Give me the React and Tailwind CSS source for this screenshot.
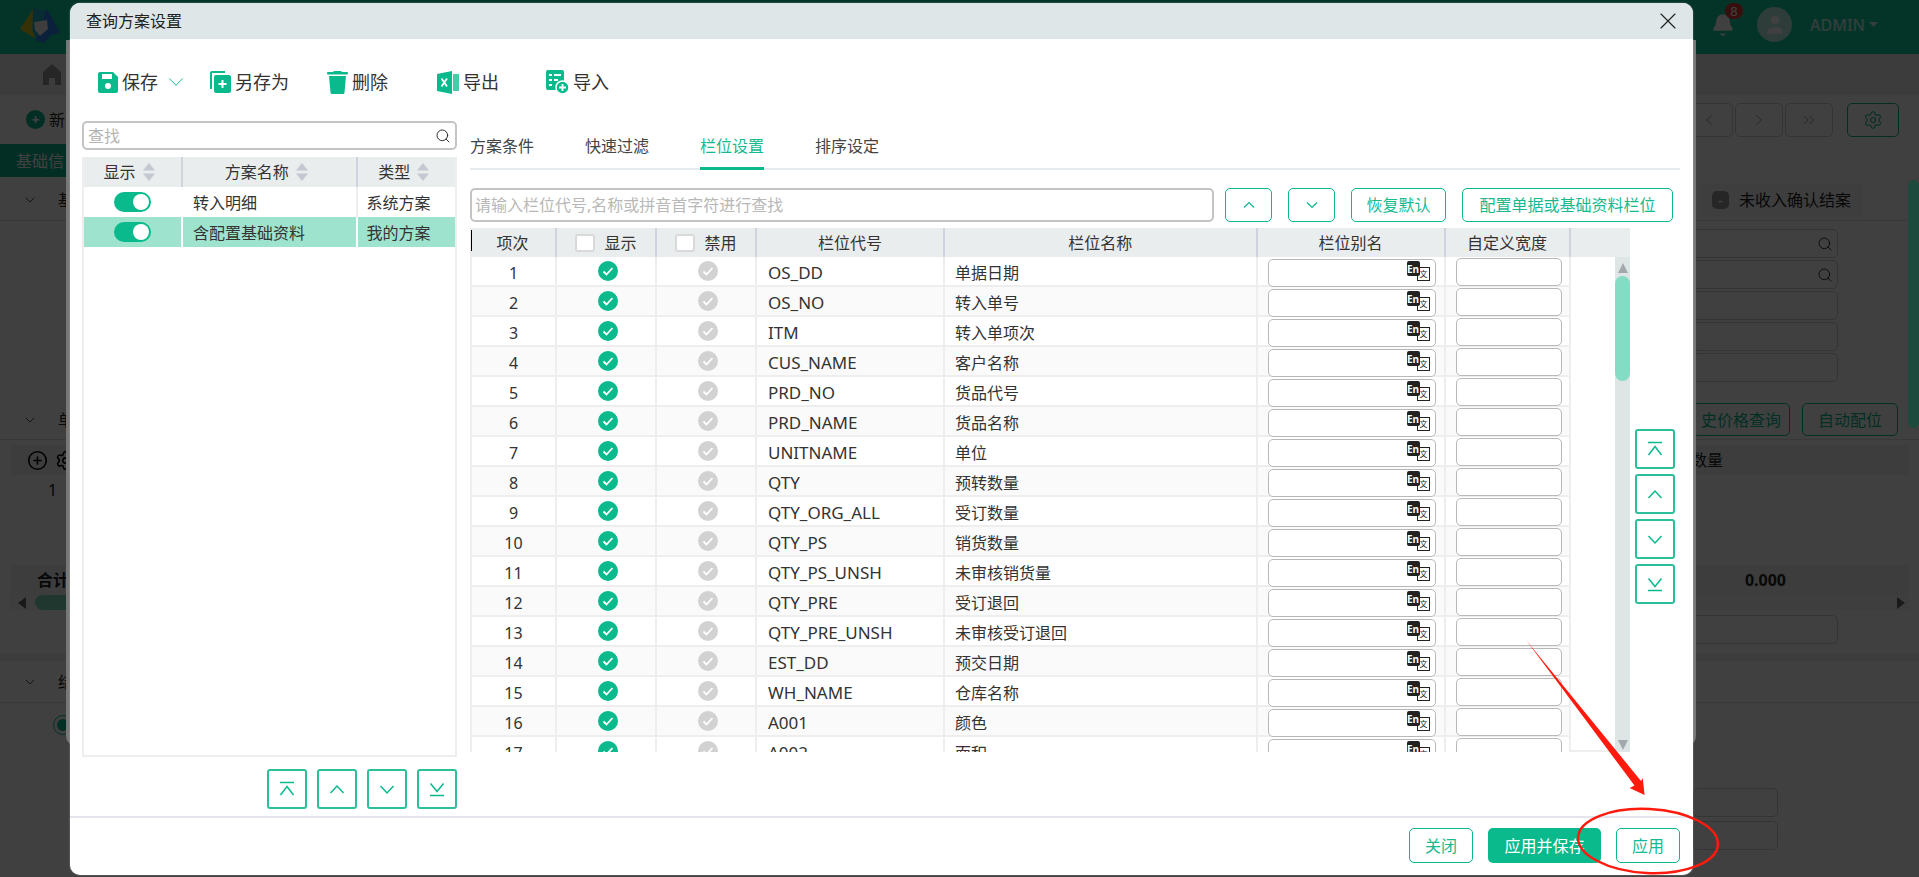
import { Bell, ChevronDown, ChevronLeft, ChevronRight, ChevronsRight, CirclePlus, Search, Settings, User, X } from "lucide-react";

const FONT = "font-['Noto_Sans','Noto_Sans_CJK_SC',sans-serif]";

const ROWS = [
  ["OS_DD", "单据日期"],
  ["OS_NO", "转入单号"],
  ["ITM", "转入单项次"],
  ["CUS_NAME", "客户名称"],
  ["PRD_NO", "货品代号"],
  ["PRD_NAME", "货品名称"],
  ["UNITNAME", "单位"],
  ["QTY", "预转数量"],
  ["QTY_ORG_ALL", "受订数量"],
  ["QTY_PS", "销货数量"],
  ["QTY_PS_UNSH", "未审核销货量"],
  ["QTY_PRE", "受订退回"],
  ["QTY_PRE_UNSH", "未审核受订退回"],
  ["EST_DD", "预交日期"],
  ["WH_NAME", "仓库名称"],
  ["A001", "颜色"],
  ["A002", "面积"],
];

const GRID = "grid grid-cols-[87px_100px_100px_188px_312.5px_188px_125px]";

function SaveIcon() {
  return (
    <svg width="20" height="21" viewBox="0 0 20 21">
      <path d="M2 0h13l5 5v14a2 2 0 0 1-2 2H2a2 2 0 0 1-2-2V2a2 2 0 0 1 2-2z" fill="#0ab98c" />
      <rect x="4" y="2" width="10" height="5" rx="0.5" fill="#fff" />
      <circle cx="10" cy="14" r="3" fill="#fff" />
    </svg>
  );
}

function SaveAsIcon() {
  return (
    <svg width="21" height="22" viewBox="0 0 21 22">
      <path d="M1 18V2a1 1 0 0 1 1-1h13" fill="none" stroke="#0ab98c" strokeWidth="2" />
      <rect x="4" y="4" width="17" height="18" rx="2" fill="#0ab98c" />
      <path d="M12.5 9v8M8.500 13h8" stroke="#fff" strokeWidth="2" />
    </svg>
  );
}

function TrashIcon() {
  return (
    <svg width="21" height="23" viewBox="0 0 21 23">
      <rect x="0" y="1" width="21" height="2.500" rx="1" fill="#0ab98c" />
      <path d="M6 1l1-1h7l1 1z" fill="#0ab98c" />
      <path d="M2 5h17l-1.500 16.500a1.500 1.500 0 0 1-1.500 1.500H5a1.500 1.500 0 0 1-1.500-1.500z" fill="#0ab98c" />
    </svg>
  );
}

function ExcelIcon() {
  return (
    <svg width="22" height="23" viewBox="0 0 22 23">
      <path d="M0 3l15-3v23L0 20z" fill="#0ab98c" />
      <path d="M16 3h6v17h-6z" fill="#0ab98c" opacity="0.75" />
      <path d="M4.500 7.500l5.500 8M10 7.500l-5.500 8" stroke="#fff" strokeWidth="1.800" />
    </svg>
  );
}

function ImportIcon() {
  return (
    <svg width="23" height="24" viewBox="0 0 23 24">
      <path d="M2 0h14a2 2 0 0 1 2 2v18H2a2 2 0 0 1-2-2V2a2 2 0 0 1 2-2z" fill="#0ab98c" />
      <path d="M3 5h3M8 5h7M3 10h3M8 10h4M3 15h3" stroke="#fff" strokeWidth="2" />
      <circle cx="16.500" cy="17.500" r="6.500" fill="#0ab98c" stroke="#fff" strokeWidth="1.500" />
      <path d="M16.500 14v7M13 17.500h7" stroke="#fff" strokeWidth="1.800" />
    </svg>
  );
}

function ToolItem({ icon, label, className }) {
  return (
    <div className={`flex items-center gap-1 ${className}`}>
      {icon}
      <span className="text-[18px] leading-6 text-[#333]">{label}</span>
    </div>
  );
}

function SortCaret() {
  return (
    <svg width="14" height="20" viewBox="0 0 14 20" className="shrink-0">
      <path d="M7 1l6 7.500H1z" fill="#c3c8d2" />
      <path d="M7 19l6-7.500H1z" fill="#c3c8d2" />
    </svg>
  );
}

function Toggle() {
  return (
    <div className="flex h-5 w-[37px] items-center justify-end rounded-full bg-[#0ab98c] pr-[2px]">
      <div className="h-4 w-4 rounded-full bg-white" />
    </div>
  );
}

function CheckMark({ on }) {
  return (
    <svg width="20" height="20" viewBox="0 0 20 20" className="ml-1">
      <circle cx="10" cy="10" r="10" fill={on ? "#0ab98c" : "#d2d2d2"} />
      <path d="M5.500 10.500l3 3 6-6.500" fill="none" stroke="#fff" strokeWidth="1.800" />
    </svg>
  );
}

function Box() {
  return <div className="h-[18px] w-5 rounded-[3px] border-2 border-[#d9d9d9] bg-white" />;
}

function Arrow({ type }) {
  return (
    <svg width="18" height="18" viewBox="0 0 18 18" fill="none" stroke="#0ab98c" strokeWidth="1.500">
      {type === "top" && <path d="M2 2.500h14M2.500 15L9 6.500 15.500 15" />}
      {type === "up" && <path d="M2.500 13L9 6l6.500 7" />}
      {type === "down" && <path d="M2.500 6L9 13l6.500-7" />}
      {type === "bottom" && <path d="M2.500 3.500L9 11.500l6.500-8M2 15.500h14" />}
    </svg>
  );
}

function MoveBtn({ type }) {
  return (
    <button className="flex h-10 w-10 items-center justify-center rounded-[3px] border-2 border-[#2cc09a] bg-white">
      <Arrow type={type} />
    </button>
  );
}

function SmallArrowBtn({ d }) {
  return (
    <button className="flex h-[34px] w-[47px] items-center justify-center rounded-[5px] border border-[#0ab98c] bg-white">
      <svg width="14" height="14" viewBox="0 0 14 14" fill="none" stroke="#0ab98c" strokeWidth="1.200">
        <path d={d} />
      </svg>
    </button>
  );
}

function OutlineBtn({ className, children }) {
  return (
    <button className={`flex h-[35px] items-center justify-center rounded-[5px] border border-[#0ab98c] bg-white text-[16px] text-[#15ba8f] ${className}`}>
      {children}
    </button>
  );
}

function EnIcon() {
  return (
    <div className="absolute right-[5px] top-[1px] h-[20px] w-[23px]">
      <div className="absolute bottom-0 right-0 flex h-[14px] w-[13px] items-center justify-end border border-[#222] bg-white pr-[1px] text-[8px] leading-none text-[#222]">文</div>
      <div className="absolute left-0 top-0 flex h-[15px] w-[13px] items-center justify-center rounded-[2px] bg-[#222] text-[10px] font-bold leading-none text-white">En</div>
    </div>
  );
}

function FieldRow({ index, code, name }) {
  const stripe = index % 2 === 1 ? "bg-[#fafafa]" : "bg-white";
  const cell = "flex h-[30px] items-center border-r-2 border-b-2 border-[#eeeeee]";
  return (
    <div className={`${GRID} ${stripe} text-[16px] text-[#333]`}>
      <div className={`${cell} justify-center border-l-2 pt-[3px]`}>{index + 1}</div>
      <div className={`${cell} justify-center`}><CheckMark on /></div>
      <div className={`${cell} justify-center`}><CheckMark /></div>
      <div className={`${cell} pl-[11px] pt-[3px] text-[17px]`}>{code}</div>
      <div className={`${cell} pl-[10px] pt-[3px]`}>{name}</div>
      <div className={`${cell} pl-[10px]`}>
        <div className="relative h-[28px] w-[168px] translate-y-[2px] rounded-[5px] border border-[#b8b8b8] bg-white">
          <EnIcon />
        </div>
      </div>
      <div className={`${cell} pl-[10px]`}>
        <div className="h-[28px] w-[106px] translate-y-[1px] rounded-[5px] border border-[#b8b8b8] bg-white" />
      </div>
    </div>
  );
}

function FieldHead() {
  const cell = "flex h-[29px] items-center justify-center gap-[9px] border-r-2 border-[#cfd3de]";
  return (
    <div className="relative flex w-[1160px] bg-[#e9eded] text-[16px] text-[#333]">
      <div className="absolute left-[1px] top-[2px] h-[21px] w-px bg-black" />
      <div className={GRID}>
        <div className={cell}>项次</div>
        <div className={cell}><Box />显示</div>
        <div className={cell}><Box />禁用</div>
        <div className={cell}>栏位代号</div>
        <div className={cell}>栏位名称</div>
        <div className={cell}>栏位别名</div>
        <div className={cell}>自定义宽度</div>
      </div>
    </div>
  );
}

function Scrollbar() {
  return (
    <div className="flex h-[495px] w-[15px] flex-col items-center bg-[#dde6e4]">
      <svg width="12" height="10" viewBox="0 0 12 10" className="mt-[6px] shrink-0">
        <path d="M6 0l5 10H1z" fill="#a3a8ae" />
      </svg>
      <div className="mt-[3px] h-[105px] w-[15px] rounded-full bg-[#85dcc4]" />
      <div className="flex-1" />
      <svg width="12" height="10" viewBox="0 0 12 10" className="mb-[2px] shrink-0">
        <path d="M6 10l5-10H1z" fill="#a3a8ae" />
      </svg>
    </div>
  );
}

function PlanRow({ name, type, selected }) {
  return (
    <div className={`grid h-[30px] grid-cols-[99px_174.500px_1fr] text-[16px] text-[#333] ${selected ? "bg-[#9ee3ce]" : "bg-white"}`}>
      <div className="flex items-center justify-center border-r-2 border-white"><Toggle /></div>
      <div className={`flex items-center border-r-2 pl-[10px] pt-[2px] ${selected ? "border-white" : "border-[#eeeeee]"}`}>{name}</div>
      <div className="flex items-center pl-[9px] pt-[2px]">{type}</div>
    </div>
  );
}

function PlanPanel() {
  return (
    <div className="w-[375px]">
      <div className="flex h-[29px] items-center justify-between rounded-[5px] border-2 border-[#c4c4c4] pl-1 pr-1">
        <span className="text-[16px] text-[#b4b4b4]">查找</span>
        <Search size={16} strokeWidth={1.400} className="text-[#222]" />
      </div>
      <div className="mt-[7px] h-[600px] border-2 border-t-0 border-[#eeeeee]">
        <div className="grid h-[30px] grid-cols-[99px_174.500px_1fr] bg-[#e9eded] text-[16px] text-[#333]">
          <div className="flex items-center justify-center gap-[6px] border-r-2 border-[#cfd3de] pr-[6px]">显示<SortCaret /></div>
          <div className="flex items-center justify-center gap-[6px] border-r-2 border-[#cfd3de] pr-[5px]">方案名称<SortCaret /></div>
          <div className="flex items-center justify-center gap-[6px] pr-[4px]">类型<SortCaret /></div>
        </div>
        <PlanRow name="转入明细" type="系统方案" />
        <PlanRow name="含配置基础资料" type="我的方案" selected />
      </div>
      <div className="mt-[12px] flex justify-end gap-[10px]">
        <MoveBtn type="top" />
        <MoveBtn type="up" />
        <MoveBtn type="down" />
        <MoveBtn type="bottom" />
      </div>
    </div>
  );
}

function FieldPanel() {
  return (
    <div className="w-[1210px]">
      <div className="flex h-[49px] gap-[51px] border-b-2 border-[#e6e9ee] text-[16px] text-[#444]">
        <div className="flex h-[49px] items-center pt-[1px]">方案条件</div>
        <div className="flex h-[49px] items-center pt-[1px]">快速过滤</div>
        <div className="flex h-[49px] items-center border-b-[3px] border-[#0ab98c] pt-[4px] text-[#15ba8f]">栏位设置</div>
        <div className="flex h-[49px] items-center pt-[1px]">排序设定</div>
      </div>
      <div className="mt-[18px] flex h-[34px] items-center">
        <div className="flex h-[34px] w-[744px] items-center rounded-[5px] border-2 border-[#c4c4c4] pl-[3px] text-[16px] text-[#b8b8b8]">
          请输入栏位代号,名称或拼音首字符进行查找
        </div>
        <div className="ml-[11px]"><SmallArrowBtn d="M2 9.500L7 4.500l5 5" /></div>
        <div className="ml-4"><SmallArrowBtn d="M2 4.500L7 9.500l5-5" /></div>
        <button className="ml-4 h-[34px] w-[95px] rounded-[5px] border border-[#0ab98c] text-[16px] text-[#15ba8f]">恢复默认</button>
        <button className="ml-4 h-[34px] w-[211px] rounded-[5px] border border-[#0ab98c] text-[16px] text-[#15ba8f]">配置单据或基础资料栏位</button>
      </div>
      <div className="mt-[6px] flex">
        <div className="w-[1160px]">
          <FieldHead />
          <div className="flex h-[495px] overflow-hidden">
            <div className="w-[1100px]">
              {ROWS.map((r, i) => (
                <FieldRow key={r[0]} index={i} code={r[0]} name={r[1]} />
              ))}
            </div>
            <div className="w-[45px] border-b-2 border-[#eeeeee]" />
            <Scrollbar />
          </div>
        </div>
        <div className="ml-[5px] mt-[201px] flex flex-col gap-[5px]">
          <MoveBtn type="top" />
          <MoveBtn type="up" />
          <MoveBtn type="down" />
          <MoveBtn type="bottom" />
        </div>
      </div>
    </div>
  );
}

function Modal() {
  return (
    <div className="absolute left-[70px] top-[3px] z-20 flex h-[872px] w-[1623px] flex-col overflow-hidden rounded-[10px] bg-white shadow-[0_0_2px_rgba(255,255,255,0.4)]">
      <div className="flex h-[36px] shrink-0 items-center justify-between bg-[#dee6e8] pl-4 pr-[11px]">
        <span className="text-[16px] text-[#222]">查询方案设置</span>
        <X size={28} strokeWidth={1} className="text-[#222]" />
      </div>
      <div className="flex h-[82px] shrink-0 items-center pl-7 pt-[4px]">
        <ToolItem icon={<SaveIcon />} label="保存" />
        <ChevronDown size={26} strokeWidth={0.900} className="ml-[5px] text-[#0ab98c]" />
        <ToolItem icon={<SaveAsIcon />} label="另存为" className="ml-[21px]" />
        <ToolItem icon={<TrashIcon />} label="删除" className="ml-[38px]" />
        <ToolItem icon={<ExcelIcon />} label="导出" className="ml-[49px]" />
        <ToolItem icon={<ImportIcon />} label="导入" className="ml-[47px]" />
      </div>
      <div className="flex h-[695px] shrink-0 pl-3">
        <PlanPanel />
        <div className="ml-[13px]"><FieldPanel /></div>
      </div>
      <div className="flex flex-1 justify-end gap-[15px] border-t-2 border-[#e4e4ec] pr-[13px] pt-[10px]">
        <OutlineBtn className="w-16">关闭</OutlineBtn>
        <button className="h-[35px] w-[113px] rounded-[5px] bg-[#0ab98c] text-[16px] text-white">应用并保存</button>
        <OutlineBtn className="w-16">应用</OutlineBtn>
      </div>
    </div>
  );
}

function Logo() {
  return (
    <svg width="40" height="36" viewBox="0 0 40 36">
      <path d="M1 22L15 1l10 6-8 24z" fill="#d8c21f" stroke="#d8c21f" strokeLinejoin="round" strokeWidth="1.500" />
      <path d="M14 1l13 4 2 26-12 3-4-12z" fill="#1fb0c8" stroke="#1fb0c8" strokeLinejoin="round" strokeWidth="1.500" />
      <path d="M27 3l12 22-9 3-6 7-7-2z" fill="#2f7fe8" stroke="#2f7fe8" strokeLinejoin="round" strokeWidth="1.500" />
      <path d="M14 15l13-2 1 9-8 7-5-6z" fill="#eef2f0" />
    </svg>
  );
}

function NavBtn({ children }) {
  return <div className="flex h-[34px] w-[48px] items-center justify-center rounded-[5px] border border-[#cfcfcf] text-[#8a8a8a]">{children}</div>;
}

function GhostInput({ className, icon }) {
  return (
    <div className={`flex h-[29px] items-center justify-end rounded-[5px] border border-[#cfcfcf] bg-white pr-1 ${className}`}>
      {icon && <Search size={16} strokeWidth={1.400} className="text-[#222]" />}
    </div>
  );
}

function PageBehind() {
  return (
    <div className="flex h-[877px] flex-col bg-white text-[16px] text-[#222]">
      <div className="flex h-[54px] shrink-0 items-center justify-between bg-[#10cfa0] pb-[5px] pl-5 pr-[41px]">
        <Logo />
        <div className="flex items-center text-white">
          <div className="relative mr-[22px]">
            <Bell size={24} fill="#fff" strokeWidth={1.500} />
            <span className="absolute -right-2 -top-[10px] flex h-[16px] w-[18px] items-center justify-center rounded-full bg-[#e03838] text-[13px] leading-[16px]">8</span>
          </div>
          <div className="flex h-[35px] w-[35px] items-center justify-center overflow-hidden rounded-full bg-white/70">
            <User size={24} fill="#fff" strokeWidth={1} />
          </div>
          <span className="ml-[18px] text-[16px] font-medium text-white/80">ADMIN</span>
          <svg width="9" height="5" viewBox="0 0 9 5" className="ml-1"><path d="M0 0h9L4.500 5z" fill="#fff" fillOpacity="0.8" /></svg>
        </div>
      </div>

      <div className="flex h-[41px] shrink-0 items-center bg-[#f0f0f0] pl-[43px]">
        <svg width="18" height="21" viewBox="0 0 18 21"><path d="M9 0l9 8v13h-6v-7H6v7H0V8z" fill="#999" /></svg>
      </div>

      <div className="flex h-[49px] shrink-0 items-center justify-between pl-[26px] pr-5">
        <div className="flex items-center gap-1">
          <div className="flex h-[19px] w-[19px] items-center justify-center rounded-full bg-[#0db88c] text-[14px] font-bold leading-none text-white">+</div>
          <span>新</span>
        </div>
        <div className="flex items-center">
          <div className="flex gap-[2px]">
            <NavBtn><ChevronLeft size={18} strokeWidth={1.200} /></NavBtn>
            <NavBtn><ChevronRight size={18} strokeWidth={1.200} /></NavBtn>
            <NavBtn><ChevronsRight size={18} strokeWidth={1.200} /></NavBtn>
          </div>
          <div className="ml-[14px] flex h-[34px] w-[52px] items-center justify-center rounded-[5px] border border-[#0db88c] text-[#0db88c]">
            <Settings size={20} strokeWidth={1.300} />
          </div>
        </div>
      </div>

      <div className="flex h-[33px] w-[70px] shrink-0 items-center rounded-r-[4px] bg-[#0db88c] pl-4 text-white">基础信</div>

      <div className="mt-[3px] flex h-[41px] shrink-0 items-center justify-between border-b border-[#ddd] pl-[22px] pr-[56px]">
        <div className="flex items-center gap-5">
          <ChevronDown size={16} strokeWidth={1.200} />
          <span>基</span>
        </div>
        <div className="flex items-center gap-[10px] rounded bg-[#f5f5f5] px-3 py-[5px]">
          <div className="flex h-[18px] w-[17px] items-center justify-center rounded-[5px] bg-[#999] text-white">-</div>
          未收入确认结案
        </div>
      </div>

      <div className="mt-2 flex h-[154px] shrink-0 flex-col items-end gap-[2px] pr-[81px]">
        <GhostInput className="w-[146px]" icon />
        <GhostInput className="w-[146px]" icon />
        <GhostInput className="w-[146px]" />
        <GhostInput className="w-[146px]" />
        <GhostInput className="w-[146px]" />
      </div>

      <div className="mt-5 flex h-[37px] shrink-0 items-start justify-between border-b border-[#ddd] pl-[22px] pr-[21px]">
        <div className="flex h-[34px] items-center gap-5">
          <ChevronDown size={16} strokeWidth={1.200} />
          <span>单</span>
        </div>
        <div className="flex gap-[12px] text-[#0db88c]">
          <div className="flex h-[33px] w-[97px] items-center justify-end rounded-[5px] border border-[#0db88c] pr-2">史价格查询</div>
          <div className="flex h-[33px] w-[96px] items-center justify-center rounded-[5px] border border-[#0db88c]">自动配位</div>
        </div>
      </div>

      <div className="mt-[5px] flex h-[165px] shrink-0 flex-col px-[10px]">
        <div className="flex h-[30px] items-center justify-between bg-[#f2f2f2] pl-[17px] pr-[186px]">
          <div className="flex items-center gap-[7px] text-black">
            <CirclePlus size={21} strokeWidth={1.800} />
            <Settings size={21} strokeWidth={1.800} />
          </div>
          <span>数量</span>
        </div>
        <div className="flex h-[30px] items-center pl-[38px]">1</div>
        <div className="h-[60px]" />
        <div className="flex h-[30px] items-center justify-between bg-[#f2f2f2] pl-[27px] pr-[123px] font-bold">
          <span>合计</span>
          <span>0.000</span>
        </div>
        <div className="flex h-[15px] items-center justify-between bg-[#f5f5f5] pl-[8px] pr-[4px]">
          <div className="flex items-center gap-[9px]">
            <svg width="8" height="12" viewBox="0 0 8 12"><path d="M0 6l8-6v12z" fill="#666" /></svg>
            <div className="h-[15px] w-[60px] rounded-full bg-[#7fdcc0]" />
          </div>
          <svg width="8" height="12" viewBox="0 0 8 12"><path d="M8 6L0 0v12z" fill="#666" /></svg>
        </div>
      </div>

      <div className="mt-[5px] flex justify-end pr-[81px]">
        <GhostInput className="w-[146px]" />
      </div>

      <div className="mt-[9px] h-2 shrink-0 bg-[#f4f4f4]" />

      <div className="flex h-[42px] shrink-0 items-center gap-5 border-b border-[#ddd] pl-[22px]">
        <ChevronDown size={16} strokeWidth={1.200} />
        <span>结</span>
      </div>

      <div className="flex flex-1 items-start justify-between pl-[53px] pr-[141px]">
        <div className="mt-[12px] flex h-5 w-5 items-center justify-center rounded-full border border-[#0db88c]">
          <div className="h-3 w-3 rounded-full bg-[#0db88c]" />
        </div>
        <div className="mt-[85px] flex flex-col gap-[4px]">
          <GhostInput className="w-[85px]" />
          <GhostInput className="w-[85px]" />
        </div>
      </div>
    </div>
  );
}

function RedMark() {
  return (
    <svg width="1919" height="877" viewBox="0 0 1919 877" className="pointer-events-none absolute left-0 top-0 z-30">
      <polygon points="1526,640 1641,781 1642.700,778 1644.600,795 1629.600,788 1634.500,785.500" fill="#ff1a0d" />
      <ellipse cx="1648" cy="841" rx="70" ry="32" transform="rotate(3 1648 841)" fill="none" stroke="#ff1a0d" strokeWidth="2.500" />
    </svg>
  );
}

export default function App() {
  return (
    <div className={`relative h-[877px] w-[1919px] overflow-hidden ${FONT}`}>
      <PageBehind />
      <div className="absolute inset-0 z-10 bg-black/75" />
      <div className="absolute left-[66px] top-[40px] z-10 h-[706px] w-[1630px] rounded-b-[10px] bg-[#777]" />
      <div className="absolute right-0 top-[180px] z-10 h-[248px] w-[11px] rounded-full bg-[#1c4a3c]" />
      <Modal />
      <RedMark />
    </div>
  );
}
